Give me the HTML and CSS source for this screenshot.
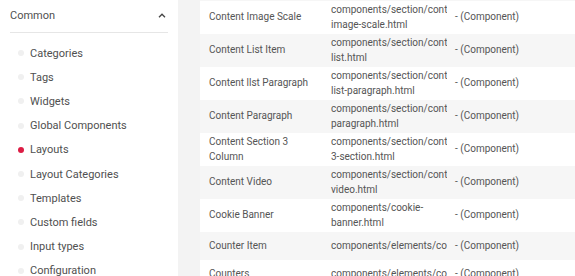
FILE: index.html
```html
<!DOCTYPE html>
<html>
<head>
<meta charset="utf-8">
<link rel="stylesheet" href="styles.css">
</head>
<body>
<div class="page">
  <aside class="sidebar">
    <div class="group-head">
      <span>Common</span>
      <svg class="chev" width="8" height="5" viewBox="0 0 8 5"><path d="M1 4.2 L4 1.2 L7 4.2" fill="none" stroke="#444" stroke-width="1.3"/></svg>
    </div>
    <ul class="menu">
      <li><i class="dot"></i>Categories</li>
      <li><i class="dot"></i>Tags</li>
      <li><i class="dot"></i>Widgets</li>
      <li><i class="dot"></i>Global Components</li>
      <li class="active"><i class="dot"></i>Layouts</li>
      <li><i class="dot"></i>Layout Categories</li>
      <li><i class="dot"></i>Templates</li>
      <li><i class="dot"></i>Custom fields</li>
      <li><i class="dot"></i>Input types</li>
      <li><i class="dot"></i>Configuration</li>
    </ul>
  </aside>
  <main class="content">
    <table class="list">
      <colgroup><col class="c1"><col class="c2"><col class="c3"></colgroup>
      <tbody>
        <tr><td>Content Image Scale</td><td class="path">components/section/cont<br>image-scale.html</td><td>- (Component)</td></tr>
        <tr><td>Content List Item</td><td class="path">components/section/cont<br>list.html</td><td>- (Component)</td></tr>
        <tr><td>Content llst Paragraph</td><td class="path">components/section/cont<br>list-paragraph.html</td><td>- (Component)</td></tr>
        <tr><td>Content Paragraph</td><td class="path">components/section/cont<br>paragraph.html</td><td>- (Component)</td></tr>
        <tr><td>Content Section 3 Column</td><td class="path">components/section/cont<br>3-section.html</td><td>- (Component)</td></tr>
        <tr><td>Content Video</td><td class="path">components/section/cont<br>video.html</td><td>- (Component)</td></tr>
        <tr><td>Cookie Banner</td><td class="path">components/cookie-<br>banner.html</td><td>- (Component)</td></tr>
        <tr><td>Counter Item</td><td class="path">components/elements/co</td><td>- (Component)</td></tr>
        <tr><td>Counters</td><td class="path">components/elements/co</td><td>- (Component)</td></tr>
      </tbody>
    </table>
  </main>
</div>
</body>
</html>
```
FILE: styles.css
```css
html, body {
  margin: 0;
  padding: 0;
  height: 100%;
  overflow: hidden;
}
body {
  background: #f3f3f3;
  font-family: Roboto, "Liberation Sans", sans-serif;
  color: #555;
}
.page {
  display: flex;
  gap: 22px;
  height: 100%;
}
.sidebar {
  width: 178px;
  flex: none;
  background: #fff;
  height: 100%;
}
.group-head {
  margin: 0 10px;
  height: 30px;
  padding-bottom: 2px;
  display: flex;
  align-items: center;
  justify-content: space-between;
  border-bottom: 1px solid #e6e6e6;
  font-size: 11px;
  color: #505050;
}
.chev {
  margin-right: 2px;
}
.menu {
  list-style: none;
  margin: 0;
  padding: 8px 0 0 18px;
}
.menu li {
  height: 24.2px;
  display: flex;
  align-items: center;
  font-size: 11px;
  color: #505050;
}
.dot {
  width: 6px;
  height: 6px;
  border-radius: 50%;
  background: #f0f0f0;
  margin-right: 6px;
  flex: none;
}
.menu li.active .dot {
  background: #dc1c44;
}
.content {
  flex: 1;
  min-width: 0;
  background: #fff;
  border-top: 1px solid #f6f6f6;
  overflow: hidden;
}
.list {
  border-collapse: collapse;
  table-layout: fixed;
  width: 100%;
  font-size: 10px;
  color: #555;
}
.c1 { width: 123px; }
.c2 { width: 124px; }
.list tr {
  height: 28px;
}
.list tr:nth-child(even) {
  background: #f6f6f6;
}
.list td {
  padding: 2px 8px 2px 8px;
  line-height: 14.5px;
  vertical-align: middle;
}
.list td:first-child {
  padding-left: 9px;
}
.list td.path {
  white-space: nowrap;
  overflow: hidden;
}
```
